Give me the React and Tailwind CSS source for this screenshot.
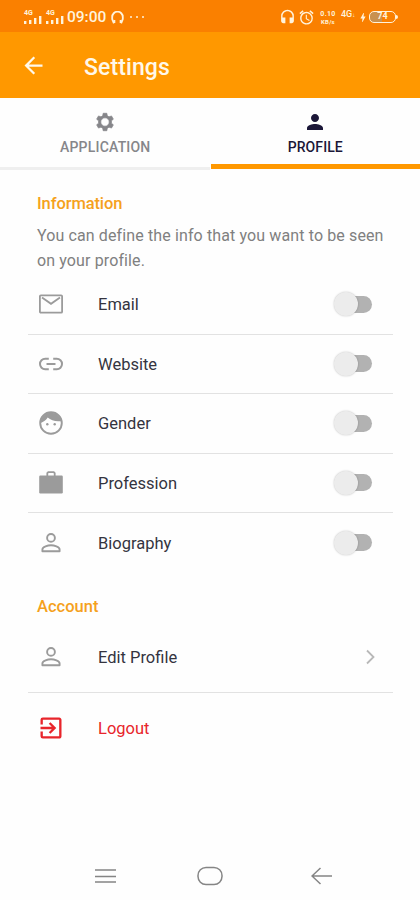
import { useState } from 'react'
import {
  MdAlarm,
  MdArrowBack,
  MdBolt,
  MdExitToApp,
  MdHeadset,
  MdPerson
} from 'react-icons/md'

function GearIcon({ className }) {
  return (
    <svg className={className} viewBox="0 0 24 24" fill="currentColor" stroke="currentColor" strokeLinejoin="round">
      <path
        fillRule="evenodd"
        strokeWidth="0.8"
        d="M10 2.500h4l.5 2.800 1.900 1.100 2.700-1 2 3.500-2.100 1.800v2.600l2.100 1.800-2 3.500-2.700-1-1.900 1.100-.5 2.800h-4l-.5-2.800-1.900-1.100-2.700 1-2-3.500L5 13.300v-2.600L2.900 8.900l2-3.500 2.700 1 1.900-1.100zM12 7.400a4.600 4.600 0 1 0 0 9.200a4.600 4.600 0 1 0 0-9.200z"
      />
    </svg>
  )
}

function MailIcon({ className }) {
  return (
    <svg className={className} viewBox="0 0 28 28" fill="none" stroke="currentColor" strokeWidth="1.8">
      <rect x="2.900" y="5.300" width="22.200" height="17.400" rx="1" />
      <path d="M5 7.500l9 6.300 9-6.300" />
    </svg>
  )
}

function LinkIcon({ className }) {
  return (
    <svg className={className} viewBox="0 0 28 28" fill="none" stroke="currentColor" strokeWidth="2">
      <path d="M11.800 8.800H8.200a5.200 5.200 0 0 0 0 10.400h3.600M16.200 8.800h3.600a5.200 5.200 0 0 1 0 10.400h-3.600M9.500 14h9" />
    </svg>
  )
}

function FaceIcon({ className }) {
  return (
    <svg className={className} viewBox="0 0 28 28" fill="currentColor">
      <circle cx="14" cy="14" r="10.800" fill="none" stroke="currentColor" strokeWidth="1.900" />
      <path d="M3.200 14.200C6.800 13 9.300 11.300 10.700 8.600c3.300 3 8.500 4.300 13.800 3.400A10.800 10.800 0 0 0 3.200 14.200z" />
      <circle cx="10.300" cy="15.200" r="1.200" />
      <circle cx="17.700" cy="15.200" r="1.200" />
    </svg>
  )
}

function WorkIcon({ className }) {
  return (
    <svg className={className} viewBox="0 0 28 28">
      <path d="M10.300 8V4.200l1-1h5.400l1 1V8" fill="none" stroke="currentColor" strokeWidth="1.8" />
      <rect x="2.200" y="6.500" width="23.600" height="18" rx="1.200" fill="currentColor" />
    </svg>
  )
}

function UserIcon({ className }) {
  return (
    <svg className={className} viewBox="0 0 28 28" fill="none" stroke="currentColor" strokeWidth="1.9" strokeLinejoin="round">
      <circle cx="14" cy="8.900" r="3.900" />
      <path d="M5.400 22.200v-1.800c0-2.700 5.600-4.100 8.600-4.100s8.600 1.400 8.600 4.100v1.800z" />
    </svg>
  )
}

const fields = [
  { key: 'email', label: 'Email', icon: MailIcon },
  { key: 'website', label: 'Website', icon: LinkIcon },
  { key: 'gender', label: 'Gender', icon: FaceIcon },
  { key: 'profession', label: 'Profession', icon: WorkIcon },
  { key: 'biography', label: 'Biography', icon: UserIcon }
]

function Signal() {
  return (
    <div className="w-[18px]">
      <div className="text-[7px] leading-[6px] font-bold">4G</div>
      <svg className="w-[18px] h-[8px]" viewBox="0 0 18 8" fill="currentColor">
        <path d="M0 5h2.4v3H0zM5 4h2.4v4H5zM10 2h2.4v6H10zM15 0h2.4v8H15z" />
      </svg>
    </div>
  )
}

function StatusBar() {
  return (
    <div className="h-8 bg-[#fa8000] text-[#fff3dc] flex items-center justify-between pl-[24px] pr-[22px] pt-[2px]">
      <div className="flex items-center">
        <Signal />
        <div className="w-[4px]" />
        <Signal />
        <span className="ml-[3px] w-[39px] text-[15.5px] leading-4 font-medium whitespace-nowrap">09:00</span>
        <svg className="ml-[5px] w-[13px] h-[13px]" viewBox="0 0 13 13" fill="none" stroke="currentColor" strokeWidth="1.8">
          <path d="M3.2 11.6H2.6L1.2 8V6a5.3 5.3 0 0 1 10.600 0v2l-1.400 3.600h-.6" />
          <path d="M3.400 9v3M9.600 9v3" />
        </svg>
        <div className="flex gap-[4px] ml-[6px]">
          <i className="w-[2px] h-[2px] rounded-full bg-current" />
          <i className="w-[2px] h-[2px] rounded-full bg-current" />
          <i className="w-[2px] h-[2px] rounded-full bg-current" />
        </div>
      </div>
      <div className="flex items-center">
        <MdHeadset className="w-[17px] h-[17px]" />
        <MdAlarm className="w-[17px] h-[17px] ml-[2px]" />
        <div className="ml-[4px] w-[18px] font-bold text-center whitespace-nowrap">
          <div className="text-[7px] leading-[8px] tracking-[0.3px]">0.10</div>
          <div className="text-[6px] leading-[7px] tracking-[0.2px]">KB/s</div>
        </div>
        <div className="ml-[4px] w-[16px] h-[15px] text-[9px] leading-[9px] font-medium whitespace-nowrap">
          4G<span className="text-[6px]">↓</span>
        </div>
        <MdBolt className="w-[12px] h-[13px]" />
        <div className="w-[27px] h-[12px] rounded-[5px] border-[1.5px] border-current text-[9px] leading-[9px] font-bold text-center bg-linear-to-r from-[#c9914f] from-50% to-transparent to-50%">
          74
        </div>
        <div className="w-[2px] h-[4px] rounded-r bg-current" />
      </div>
    </div>
  )
}

function Toggle({ checked, onChange }) {
  return (
    <button
      onClick={onChange}
      className={`w-[39px] h-[26px] flex items-center rounded-full ${checked ? 'justify-end' : ''}`}
    >
      <span className={`w-[34px] h-[17px] ml-[4px] rounded-full flex items-center ${checked ? 'bg-[#ffcc80] justify-end' : 'bg-[#b2b2b2]'}`}>
        <span
          className={`w-[24px] h-[24px] shrink-0 rounded-full shadow-[0_0_2px_rgba(0,0,0,0.25)] ${
            checked ? 'bg-[#ff9800]' : 'bg-[#ececec] -ml-[4px]'
          }`}
        />
      </span>
    </button>
  )
}

function App() {
  const [visible, setVisible] = useState({})

  const toggle = (key) => {
    setVisible({ ...visible, [key]: !visible[key] })
  }

  return (
    <div className="w-[420px] h-[900px] bg-[#fefefe] flex flex-col font-[Roboto,sans-serif] text-[#34343f] overflow-hidden">
      <StatusBar />

      <header className="h-[66px] shrink-0 bg-[#ff9800] text-[#fff8ea] flex items-center pl-[20px]">
        <MdArrowBack className="w-[27px] h-[27px]" />
        <h1 className="ml-[37px] pt-[5px] text-[23px] leading-7 tracking-[0.1px] font-medium">Settings</h1>
      </header>

      <div className="h-[73px] shrink-0 flex">
        <button className="w-[210px] h-[72px] flex flex-col items-center pt-[13px] pl-px border-b-[3px] border-[#efefef] text-[#86868a]">
          <GearIcon className="w-[22px] h-[22px]" />
          <span className="mt-[4px] text-[14px] leading-5 tracking-[0.2px] font-medium">APPLICATION</span>
        </button>
        <button className="w-[210px] h-[71px] ml-px flex flex-col items-center pt-[12px] border-b-[5px] border-[#ff9800] text-[#1b1738]">
          <MdPerson className="w-[24px] h-[24px]" />
          <span className="mt-[3px] text-[14px] leading-5 tracking-[0.1px] font-medium">PROFILE</span>
        </button>
      </div>

      <main className="flex-1 pl-[28px] pr-[27px]">
        <h2 className="pl-[9px] pt-[22px] text-[16.5px] leading-[22px] tracking-[-0.1px] font-medium text-[#f5a11c]">Information</h2>
        <p className="pl-[9px] mt-[8px] text-[16px] leading-[25px] tracking-[0.12px] text-[#808080] whitespace-nowrap">
          You can define the info that you want to be seen
          <br />
          on your profile.
        </p>

        <div className="mt-[2px]">
          {fields.map(({ key, label, icon: Icon }) => (
            <div
              key={key}
              className="h-[59.5px] flex items-center pl-[8.5px] pr-[20px] border-b border-[#e2e2e2] last:border-b-0"
            >
              <Icon className="w-[28px] h-[28px] text-[#9b9b9b]" />
              <span className="ml-[33.5px] pt-[2px] flex-1 text-[16.5px] leading-6">{label}</span>
              <Toggle checked={!!visible[key]} onChange={() => toggle(key)} />
            </div>
          ))}
        </div>

        <h2 className="pl-[9px] mt-[23px] text-[16.5px] leading-[22px] font-medium text-[#f5a11c]">Account</h2>
        <div className="mt-[4px] h-[71px] flex items-center pl-[8.5px] pr-[18px] border-b border-[#e2e2e2]">
          <UserIcon className="w-[28px] h-[28px] text-[#9b9b9b]" />
          <span className="ml-[33.5px] pt-[2px] flex-1 text-[16.5px] leading-6">Edit Profile</span>
          <svg className="w-[9px] h-[16px] text-[#b8b8b8]" viewBox="0 0 9 16" fill="none" stroke="currentColor" strokeWidth="1.8">
            <path d="M1 1.500l6.500 6.500L1 14.500" />
          </svg>
        </div>
        <div className="h-[71px] flex items-center pl-[8.5px] text-[#e8252b]">
          <MdExitToApp className="w-[28px] h-[28px]" />
          <span className="ml-[33.5px] pt-[2px] text-[16.5px] leading-6">Logout</span>
        </div>
      </main>

      {/* system navigation */}
      <nav className="h-[48px] shrink-0 flex items-center pl-[95px] text-[#858585]">
        <svg className="w-[21px] h-[16px]" viewBox="0 0 21 16" fill="none" stroke="currentColor" strokeWidth="1.6">
          <path d="M0 2h21M0 8.500h21M0 14h21" />
        </svg>
        <svg className="ml-[81px] w-[26px] h-[20px]" viewBox="0 0 26 20" fill="none" stroke="currentColor" strokeWidth="1.5">
          <rect x="1" y="1.5" width="24" height="17" rx="8" />
        </svg>
        <svg className="ml-[88px] w-[21px] h-[18px]" viewBox="0 0 21 18" fill="none" stroke="currentColor" strokeWidth="1.5">
          <path d="M21 9H1M9.500 1L1 9l8.500 8" />
        </svg>
      </nav>
    </div>
  )
}

export default App
